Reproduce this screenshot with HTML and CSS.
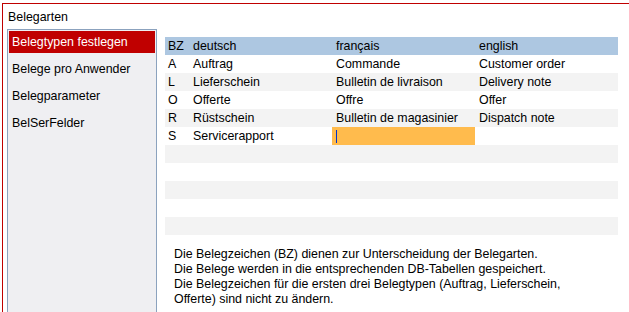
FILE: index.html
```html
<!DOCTYPE html>
<html lang="de">
<head>
    <meta charset="UTF-8">
    <title>Belegarten</title>
    <link rel="stylesheet" href="styles.css">
</head>
<body>
    <div class="frame">
        <div class="title">Belegarten</div>
        <div class="content">
            <div class="sidebar">
                <div class="nav-item active">Belegtypen festlegen</div>
                <div class="nav-item">Belege pro Anwender</div>
                <div class="nav-item">Belegparameter</div>
                <div class="nav-item">BelSerFelder</div>
            </div>
            <div class="main">
                <div class="grid">
                    <div class="row head">
                        <div class="cell c-bz">BZ</div>
                        <div class="cell c-de">deutsch</div>
                        <div class="cell c-fr">français</div>
                        <div class="cell c-en">english</div>
                    </div>
                    <div class="row">
                        <div class="cell c-bz">A</div>
                        <div class="cell c-de">Auftrag</div>
                        <div class="cell c-fr">Commande</div>
                        <div class="cell c-en">Customer order</div>
                    </div>
                    <div class="row">
                        <div class="cell c-bz">L</div>
                        <div class="cell c-de">Lieferschein</div>
                        <div class="cell c-fr">Bulletin de livraison</div>
                        <div class="cell c-en">Delivery note</div>
                    </div>
                    <div class="row">
                        <div class="cell c-bz">O</div>
                        <div class="cell c-de">Offerte</div>
                        <div class="cell c-fr">Offre</div>
                        <div class="cell c-en">Offer</div>
                    </div>
                    <div class="row">
                        <div class="cell c-bz">R</div>
                        <div class="cell c-de">Rüstschein</div>
                        <div class="cell c-fr">Bulletin de magasinier</div>
                        <div class="cell c-en">Dispatch note</div>
                    </div>
                    <div class="row">
                        <div class="cell c-bz">S</div>
                        <div class="cell c-de">Servicerapport</div>
                        <div class="cell c-fr editing"><span class="caret"></span></div>
                        <div class="cell c-en"></div>
                    </div>
                    <div class="row empty"></div>
                    <div class="row empty"></div>
                    <div class="row empty"></div>
                    <div class="row empty"></div>
                    <div class="row empty"></div>
                </div>
                <p class="note">
                    Die Belegzeichen (BZ) dienen zur Unterscheidung der Belegarten.<br>
                    Die Belege werden in die entsprechenden DB-Tabellen gespeichert.<br>
                    Die Belegzeichen für die ersten drei Belegtypen (Auftrag, Lieferschein,<br>
                    Offerte) sind nicht zu ändern.
                </p>
            </div>
        </div>
    </div>
</body>
</html>
```

FILE: styles.css
```css
html, body {
    margin: 0;
    height: 100%;
    overflow: hidden;
    background: #ffffff;
}
body {
    font-family: "Liberation Sans", Arial, sans-serif;
    font-size: 12.4px;
    color: #000000;
}
.frame {
    margin: 3px 0 0 2px;
    border-top: 1px solid #c00000;
    border-left: 1px solid #c00000;
    height: 308px;
    display: flex;
    flex-direction: column;
}
.title {
    height: 19px;
    padding: 6px 0 0 5px;
    line-height: 15px;
}
.content {
    display: flex;
    flex: 1;
    min-height: 0;
}
.sidebar {
    margin-left: 4px;
    width: 146px;
    padding: 1px;
    border: 1px solid #8ba2be;
    border-bottom: none;
    background: #efeff2;
}
.nav-item {
    height: 21px;
    line-height: 21px;
    padding-top: 1px;
    margin-bottom: 5px;
    padding-left: 3px;
}
.nav-item.active {
    background: #c00000;
    color: #ffffff;
}
.main {
    margin: 8px 0 0 8px;
}
.grid {
    width: 453px;
}
.row {
    display: grid;
    grid-template-columns: 25px 142px 143px 143px;
    height: 18px;
}
.row:nth-child(odd) {
    background: #f3f3f3;
}
.row.head {
    background: #adc7e1;
}
.cell {
    padding: 1px 0 0 3px;
    line-height: 17px;
    white-space: nowrap;
}
.c-fr, .c-en {
    padding-left: 4px;
}
.editing {
    background: #ffbb4d;
    position: relative;
}
.caret {
    position: absolute;
    left: 4px;
    top: 3px;
    width: 1px;
    height: 13px;
    background: #0033cc;
}
.note {
    margin: 12px 0 0 9px;
    line-height: 15px;
}
```
